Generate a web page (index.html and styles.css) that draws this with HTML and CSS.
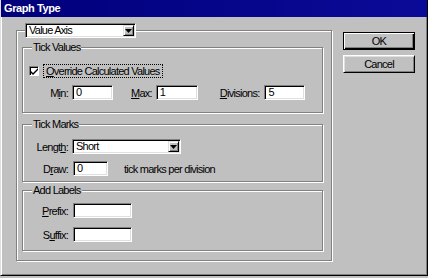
FILE: index.html
```html
<!DOCTYPE html>
<html lang="en">
<head>
    <meta charset="UTF-8">
    <title>Graph Type</title>
    <link rel="stylesheet" href="styles.css">
</head>
<body>
    <div class="window">
        <div class="titlebar">Graph Type</div>

        <div class="dialog">
            <fieldset class="group outer">
                <legend class="outer-legend">
                    <div class="select axis-select">
                        <span class="select-value">Value Axis</span>
                        <span class="select-btn">
                            <svg width="7" height="4" viewBox="0 0 7 4"><path d="M0 0h7L3.5 4z" fill="#000"/></svg>
                        </span>
                    </div>
                </legend>

                <!-- Tick Values -->
                <fieldset class="group tick-values">
                    <legend>Tick Values</legend>
                    <div class="check-row">
                        <span class="checkbox">
                            <svg width="7" height="7" viewBox="0 0 7 7"><path d="M0 3l2 2 5-5v2l-5 5-2-2z" fill="#000"/></svg>
                        </span>
                        <span class="focus-label"><u>O</u>verride Calculated Values</span>
                    </div>
                    <div class="form-row">
                        <span class="lbl">M<u>i</u>n:</span>
                        <span class="textbox w-min">0</span>
                        <span class="lbl-inline lbl-max"><u>M</u>ax:</span>
                        <span class="textbox w-max">1</span>
                        <span class="lbl-inline lbl-div"><u>D</u>ivisions:</span>
                        <span class="textbox w-div">5</span>
                    </div>
                </fieldset>

                <!-- Tick Marks -->
                <fieldset class="group tick-marks">
                    <legend>Tick Marks</legend>
                    <div class="form-row">
                        <span class="lbl">Lengt<u>h</u>:</span>
                        <div class="select length-select">
                            <span class="select-value">Short</span>
                            <span class="select-btn">
                                <svg width="7" height="4" viewBox="0 0 7 4"><path d="M0 0h7L3.5 4z" fill="#000"/></svg>
                            </span>
                        </div>
                    </div>
                    <div class="form-row row-gap">
                        <span class="lbl lbl-wide">D<u>r</u>aw:</span>
                        <span class="textbox w-draw">0</span>
                        <span class="after-text">tick marks per division</span>
                    </div>
                </fieldset>

                <!-- Add Labels -->
                <fieldset class="group add-labels">
                    <legend>Add Labels</legend>
                    <div class="form-row">
                        <span class="lbl lbl-wide"><u>P</u>refix:</span>
                        <span class="textbox w-label"></span>
                    </div>
                    <div class="form-row suffix-row">
                        <span class="lbl lbl-wide">S<u>u</u>ffix:</span>
                        <span class="textbox w-label"></span>
                    </div>
                </fieldset>
            </fieldset>

            <div class="buttons">
                <div class="btn btn-default">OK</div>
                <div class="btn">Cancel</div>
            </div>
        </div>
    </div>
</body>
</html>
```

FILE: styles.css
```css
/* Global Styles */
* {
    margin: 0;
    padding: 0;
    box-sizing: border-box;
}

body {
    background-color: #c0c0c0;
    color: #000;
    font-family: "Liberation Sans", Arial, sans-serif;
    font-size: 11px;
    letter-spacing: -0.75px;
    width: 428px;
    height: 278px;
    overflow: hidden;
}

/* Window frame */
.window {
    width: 428px;
    height: 276px;
    border: 1px solid;
    border-top: 0;
    border-color: #dfdfdf #000 #000 #dfdfdf;
    box-shadow: inset 1px 0 #fff, inset -1px -1px #808080;
    display: flex;
    flex-direction: column;
}

.titlebar {
    height: 17px;
    line-height: 16px;
    padding-left: 3px;
    background: linear-gradient(90deg, #00007b, #0a0a98);
    color: #fff;
    font-size: 11px;
    font-weight: bold;
    letter-spacing: -0.4px;
}

.dialog {
    display: flex;
    align-items: flex-start;
    padding: 6px 0 0 15px;
}

/* Group boxes */
.group {
    min-width: 0;
    border: 1px solid #808080;
    box-shadow: 1px 1px 0 #fff, inset 1px 1px 0 #fff;
}

.group legend {
    margin-left: 9px;
    padding: 0 1px;
    line-height: 13px;
    background-color: #c0c0c0;
}

.outer {
    width: 316px;
    padding: 3px 8px 9px 5px;
}

.outer .outer-legend {
    margin-left: 3px;
    padding: 0;
    line-height: normal;
}

.tick-values {
    padding: 10px 0 12px 0;
}

.tick-marks {
    margin-top: 5px;
    padding: 8px 0 5px 0;
}

.add-labels {
    margin-top: 2px;
    padding: 6px 0 8px 0;
}

/* Form rows */
.form-row {
    display: flex;
    align-items: center;
    height: 15px;
}

.row-gap {
    margin-top: 7px;
}

.suffix-row {
    margin-top: 9px;
}

.lbl {
    width: 45px;
    margin-right: 4px;
    text-align: right;
}

.lbl-wide {
    margin-right: 5px;
}

.lbl-inline {
    margin-right: 4px;
}

.lbl-max {
    margin-left: 18px;
}

.lbl-div {
    margin-left: 22px;
    margin-right: 5px;
}

.after-text {
    margin-left: 16px;
}

/* Checkbox row */
.check-row {
    display: flex;
    align-items: center;
    height: 14px;
    padding-left: 6px;
    margin-bottom: 7px;
}

.checkbox {
    width: 10px;
    height: 10px;
    background-color: #fff;
    border: 1px solid;
    border-color: #808080 #fff #fff #808080;
    box-shadow: inset 1px 1px 0 #000;
    display: flex;
    align-items: center;
    justify-content: center;
    margin-right: 4px;
}

.focus-label {
    height: 14px;
    line-height: 12px;
    padding: 0 2px;
    border: 1px dotted #000;
}

/* Sunken text boxes */
.textbox,
.select {
    height: 15px;
    background-color: #fff;
    border: 1px solid;
    border-color: #808080 #fff #fff #808080;
    box-shadow: inset 1px 1px 0 #000, inset -1px -1px 0 #dfdfdf;
    line-height: 13px;
    padding-left: 3px;
}

.w-min { width: 41px; }
.w-max { width: 42px; }
.w-div { width: 41px; }
.w-draw { width: 35px; }
.w-label { width: 59px; }

.select {
    display: flex;
    align-items: center;
    padding: 1px 1px 1px 3px;
}

.select-value {
    flex: 1;
}

.select-btn {
    width: 11px;
    height: 11px;
    background-color: #c0c0c0;
    border: 1px solid;
    border-color: #dfdfdf #000 #000 #dfdfdf;
    box-shadow: inset 1px 1px 0 #fff, inset -1px -1px 0 #808080;
    display: flex;
    align-items: center;
    justify-content: center;
}

.axis-select {
    width: 111px;
}

.length-select {
    width: 109px;
}

/* Buttons */
.buttons {
    display: flex;
    flex-direction: column;
    gap: 5px;
    margin-left: 11px;
    padding-top: 9px;
}

.btn {
    width: 72px;
    height: 18px;
    line-height: 16px;
    text-align: center;
    border: 1px solid;
    border-color: #fff #000 #000 #fff;
    box-shadow: inset 1px 1px 0 #dfdfdf, inset -1px -1px 0 #808080;
}

.btn-default {
    border-color: #000;
    box-shadow: inset 1px 1px 0 #fff, inset -1px -1px 0 #000, inset -2px -2px 0 #808080;
}
```
